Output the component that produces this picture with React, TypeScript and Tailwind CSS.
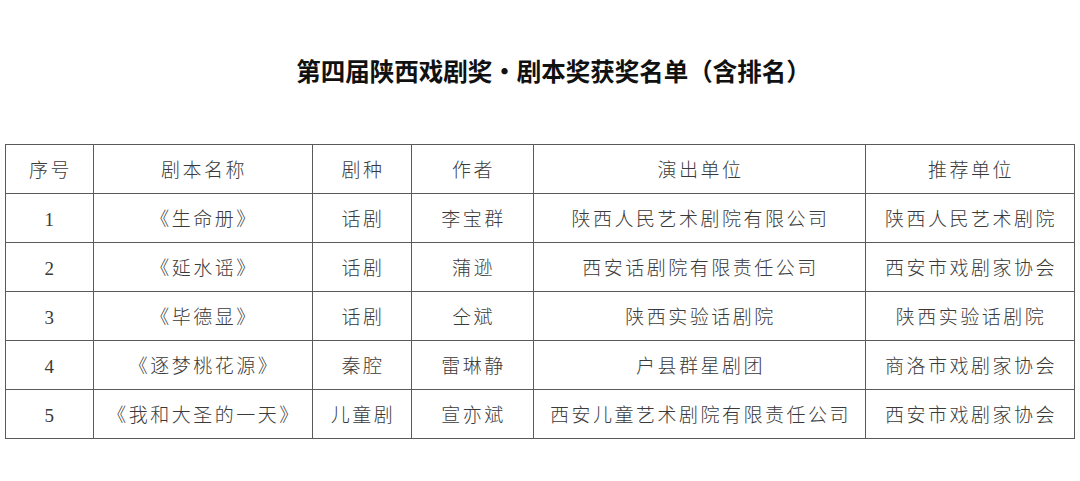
import React from "react";

const cols = [88, 219, 99, 122, 332, 209];

const header = ["序号", "剧本名称", "剧种", "作者", "演出单位", "推荐单位"];

const rows: string[][] = [
  ["1", "《生命册》", "话剧", "李宝群", "陕西人民艺术剧院有限公司", "陕西人民艺术剧院"],
  ["2", "《延水谣》", "话剧", "蒲逊", "西安话剧院有限责任公司", "西安市戏剧家协会"],
  ["3", "《毕德显》", "话剧", "仝斌", "陕西实验话剧院", "陕西实验话剧院"],
  ["4", "《逐梦桃花源》", "秦腔", "雷琳静", "户县群星剧团", "商洛市戏剧家协会"],
  ["5", "《我和大圣的一天》", "儿童剧", "宣亦斌", "西安儿童艺术剧院有限责任公司", "西安市戏剧家协会"],
];

export default function App() {
  return (
    <div className="w-[1080px] h-[481px] bg-white flex flex-col overflow-hidden">
      <h1
        className="pt-[53px] h-[89px] text-center text-[24.5px] leading-[36px] font-bold text-[#111] pl-[27px]"
        style={{ fontFamily: '"Noto Sans CJK SC", serif' }}
      >
        第四届陕西戏剧奖·剧本奖获奖名单（含排名）
      </h1>
      <div className="mt-[55px] pl-[5px]">
        <table
          className="table-fixed border-collapse w-[1070px] text-[#3a3a3a] text-[19px] font-light"
          style={{ fontFamily: '"Liberation Serif", "Noto Sans CJK SC", serif' }}
        >
          <colgroup>
            {cols.map((w, i) => (
              <col key={i} style={{ width: w }} />
            ))}
          </colgroup>
          <tbody>
            <tr className="h-[49px]">
              {header.map((h, i) => (
                <td
                  key={i}
                  className="border border-[#5a5a5a] text-center align-middle p-0 pl-[2px] tracking-[2.5px] pt-[4px]"
                >
                  {h}
                </td>
              ))}
            </tr>
            {rows.map((r, ri) => (
              <tr key={ri} className="h-[49px]">
                {r.map((c, ci) => (
                  <td
                    key={ci}
                    className="border border-[#5a5a5a] text-center align-middle p-0 pl-[2px] tracking-[2.5px] pt-[4px]"
                  >
                    {c}
                  </td>
                ))}
              </tr>
            ))}
          </tbody>
        </table>
      </div>
    </div>
  );
}
